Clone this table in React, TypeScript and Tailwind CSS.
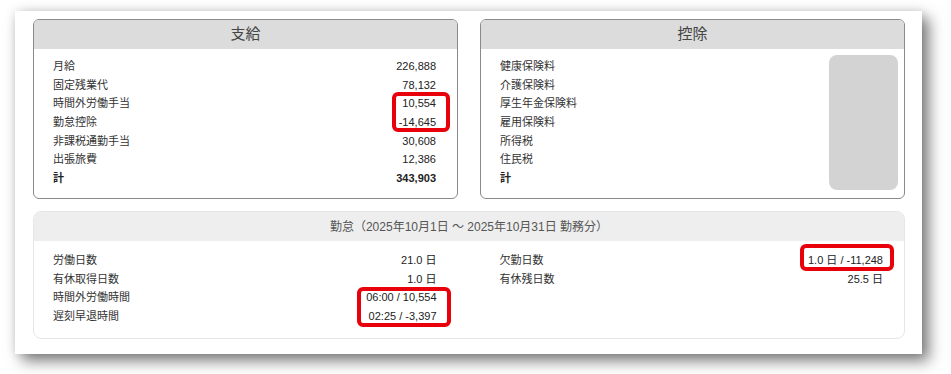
import React from 'react'

const PAY = [
  { label: '月給', value: '226,888' },
  { label: '固定残業代', value: '78,132' },
  { label: '時間外労働手当', value: '10,554' },
  { label: '勤怠控除', value: '-14,645' },
  { label: '非課税通勤手当', value: '30,608' },
  { label: '出張旅費', value: '12,386' },
]

const DEDUCT = ['健康保険料', '介護保険料', '厚生年金保険料', '雇用保険料', '所得税', '住民税']

const ATT_LEFT = [
  { label: '労働日数', value: '21.0 日' },
  { label: '有休取得日数', value: '1.0 日' },
  { label: '時間外労働時間', value: '06:00 / 10,554' },
  { label: '遅刻早退時間', value: '02:25 / -3,397' },
]

const ATT_RIGHT = [
  { label: '欠勤日数', value: '1.0 日 / -11,248' },
  { label: '有休残日数', value: '25.5 日' },
]

function Row({ label, value, bold }: { label: string; value?: string; bold?: boolean }) {
  return (
    <div className="flex h-[18.7px] items-center justify-between text-[11px] leading-none">
      <span className={bold ? 'font-bold text-[#222]' : 'text-[#333]'}>{label}</span>
      {value && <span className={bold ? 'font-bold text-[#222]' : 'text-[#222]'}>{value}</span>}
    </div>
  )
}

export default function App() {
  return (
    <div
      className="h-[374px] w-[951px] bg-white pl-[15px] pt-[11px]"
      style={{ fontFamily: '"Liberation Sans", "Noto Sans CJK JP", sans-serif' }}
    >
      <div className="relative h-[343px] w-[907px] bg-white pl-[18px] pt-[8px] shadow-[7px_7px_14px_rgba(0,0,0,0.5),0_0_10px_rgba(0,0,0,0.12)]">
        {/* 支給 / 控除 */}
        <div className="flex gap-[22px]">
          <div className="h-[180px] w-[425px] overflow-hidden rounded-[6px] border border-[#8a8a8a]">
            <div className="flex h-[29px] items-center justify-center bg-[#dcdcdc] text-[15px] text-[#444]">支給</div>
            <div className="pl-[19px] pr-[21px] pt-[8px]">
              {PAY.map(r => (
                <Row key={r.label} label={r.label} value={r.value} />
              ))}
              <Row label="計" value="343,903" bold />
            </div>
          </div>
          <div className="h-[180px] w-[425px] overflow-hidden rounded-[6px] border border-[#8a8a8a]">
            <div className="flex h-[29px] items-center justify-center bg-[#dcdcdc] text-[15px] text-[#444]">控除</div>
            <div className="flex pl-[19px] pr-[6px]">
              <div className="flex-1 pt-[8px]">
                {DEDUCT.map(l => (
                  <Row key={l} label={l} />
                ))}
                <Row label="計" bold />
              </div>
              <div className="mt-[6px] h-[135px] w-[69px] rounded-[8px] bg-[#d3d3d3]" />
            </div>
          </div>
        </div>

        {/* 勤怠 */}
        <div className="mt-[12px] h-[128px] w-[872px] overflow-hidden rounded-[8px] border border-[#e6e6e6]">
          <div className="flex h-[29px] items-center justify-center bg-[#eeeeee] text-[12px] text-[#555]">
            勤怠（2025年10月1日 〜 2025年10月31日 勤務分）
          </div>
          <div className="grid grid-cols-2 gap-x-[63px] pl-[19px] pr-[21px] pt-[10px]">
            <div>
              {ATT_LEFT.map(r => (
                <Row key={r.label} label={r.label} value={r.value} />
              ))}
            </div>
            <div>
              {ATT_RIGHT.map(r => (
                <Row key={r.label} label={r.label} value={r.value} />
              ))}
            </div>
          </div>
        </div>

        {/* 強調枠 */}
        <div className="absolute left-[377px] top-[81px] h-[40px] w-[58px] rounded-[6px] border-4 border-[#e8000b]" />
        <div className="absolute left-[342px] top-[276px] h-[40px] w-[94px] rounded-[6px] border-4 border-[#e8000b]" />
        <div className="absolute left-[785px] top-[233px] h-[27px] w-[94px] rounded-[6px] border-4 border-[#e8000b]" />
      </div>
    </div>
  )
}
